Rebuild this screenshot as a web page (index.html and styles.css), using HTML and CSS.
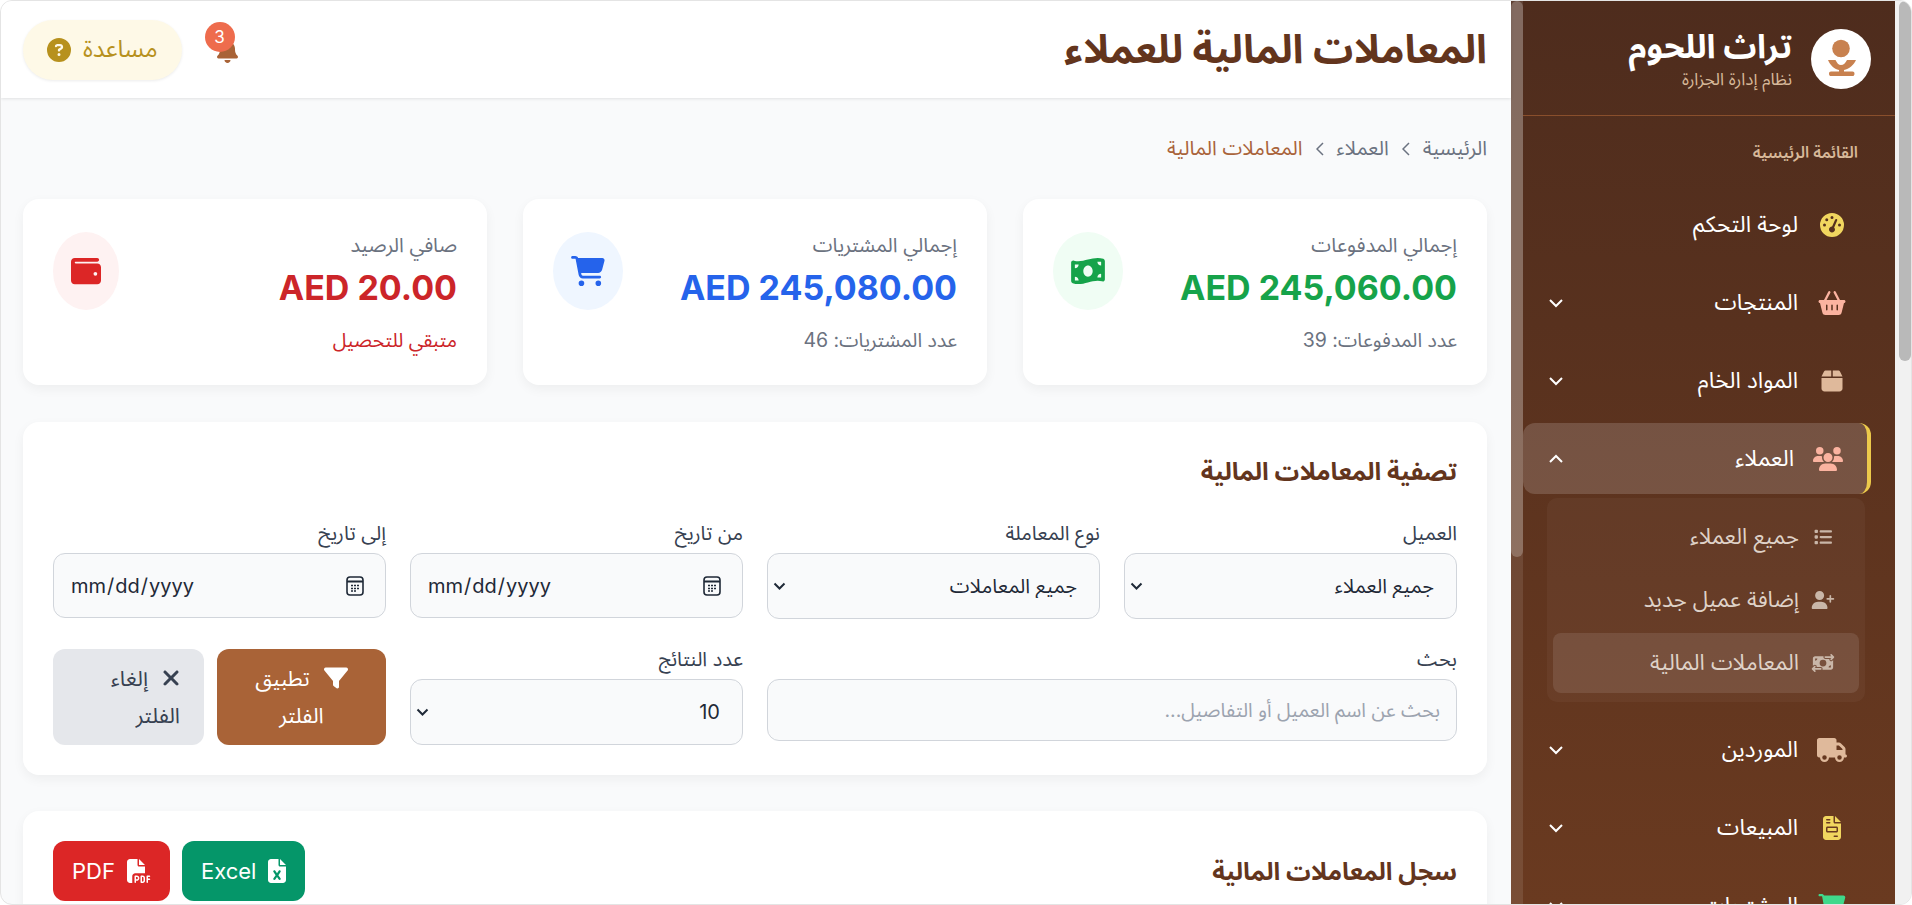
FILE: index.html
```html
<!DOCTYPE html>
<html lang="ar" dir="rtl">
<head>
    <meta charset="UTF-8">
    <meta name="viewport" content="width=device-width, initial-scale=1.0">
    <title>المعاملات المالية للعملاء</title>
    <link rel="stylesheet" href="styles.css">
</head>
<body>
<div class="window">
    <div class="page-rail"><div class="page-thumb"></div></div>

    <aside class="sidebar">
        <div class="sidebar-panel">
            <div class="brand">
                <div class="logo">
                    <svg viewBox="0 0 60 60" width="60" height="60">
                        <circle cx="30" cy="19.500" r="8.800" fill="#c8814f"/>
                        <path d="M17 31h7.500c1.500 3 3 5 5.500 5s4.500-2 6-5h9c-2 5-7 9-12 10v1.500h8.500c1.200 0 2 .8 2 2.200s-.8 2.300-2 2.300H20c-1.200 0-2-.9-2-2.300s.8-2.200 2-2.200h8V41c-5-1-9-5-11-10z" fill="#c8814f"/>
                    </svg>
                </div>
                <div class="brand-text">
                    <div class="brand-name">تراث اللحوم</div>
                    <div class="brand-sub">نظام إدارة الجزارة</div>
                </div>
            </div>
            <nav class="nav">
                <div class="nav-title">القائمة الرئيسية</div>

                <a class="nav-item">
                    <svg class="nav-icon ic-yellow" viewBox="0 0 512 512"><path d="M0 256a256 256 0 1 1 512 0A256 256 0 1 1 0 256zM288 96a32 32 0 1 0 -64 0 32 32 0 1 0 64 0zM256 416c35.300 0 64-28.700 64-64c0-17.400-6.900-33.100-18.100-44.600L366 161.700c5.300-12.100-.2-26.300-12.300-31.600s-26.300 .2-31.600 12.300L257.900 288c-.6 0-1.300 0-1.900 0c-35.300 0-64 28.700-64 64s28.700 64 64 64zM176 144a32 32 0 1 0 -64 0 32 32 0 1 0 64 0zM96 288a32 32 0 1 0 0-64 32 32 0 1 0 0 64zm352-32a32 32 0 1 0 -64 0 32 32 0 1 0 64 0z"/></svg>
                    <span>لوحة التحكم</span>
                </a>
                <a class="nav-item">
                    <svg class="nav-icon ic-coral" viewBox="0 0 576 512"><path d="M253.300 35.100c6.100-11.800 1.500-26.300-10.200-32.400s-26.300-1.500-32.400 10.200L117.600 192H32c-17.700 0-32 14.300-32 32s14.300 32 32 32L83.900 463.500C91 492 116.600 512 146 512H430c29.400 0 55-20 62.100-48.500L544 256c17.700 0 32-14.300 32-32s-14.300-32-32-32H458.400L365.300 12.900C359.200 1.200 344.700-3.400 332.900 2.700s-16.300 20.600-10.200 32.400L404.300 192H171.700L253.300 35.100zM192 304v96c0 8.800-7.200 16-16 16s-16-7.200-16-16V304c0-8.800 7.200-16 16-16s16 7.200 16 16zm96-16c8.800 0 16 7.200 16 16v96c0 8.800-7.200 16-16 16s-16-7.200-16-16V304c0-8.800 7.200-16 16-16zm128 16v96c0 8.800-7.200 16-16 16s-16-7.200-16-16V304c0-8.800 7.200-16 16-16s16 7.200 16 16z"/></svg>
                    <span>المنتجات</span>
                    <svg class="chevron" viewBox="0 0 16 10"><path d="M2 2l6 6 6-6"/></svg>
                </a>
                <a class="nav-item">
                    <svg class="nav-icon ic-tan" viewBox="0 0 448 512"><path d="M50.700 58.500L0 160H208V32H93.700C75.500 32 58.900 42.300 50.700 58.500zM240 160H448L397.300 58.500C389.100 42.300 372.500 32 354.300 32H240V160zm208 32H0V416c0 35.300 28.700 64 64 64H384c35.300 0 64-28.700 64-64V192z"/></svg>
                    <span>المواد الخام</span>
                    <svg class="chevron" viewBox="0 0 16 10"><path d="M2 2l6 6 6-6"/></svg>
                </a>
                <a class="nav-item active">
                    <svg class="nav-icon ic-coral" viewBox="0 0 640 512"><path d="M144 0a80 80 0 1 1 0 160A80 80 0 1 1 144 0zM512 0a80 80 0 1 1 0 160A80 80 0 1 1 512 0zM0 298.700C0 239.800 47.800 192 106.700 192h42.700c15.900 0 31 3.500 44.600 9.700c-1.300 7.200-1.900 14.700-1.900 22.300c0 38.200 16.800 72.500 43.300 96c-.2 0-.4 0-.7 0H21.300C9.600 320 0 310.400 0 298.700zM405.300 320c-.2 0-.4 0-.7 0c26.600-23.500 43.300-57.800 43.300-96c0-7.600-.7-15-1.900-22.300c13.600-6.300 28.700-9.700 44.600-9.700h42.700C592.200 192 640 239.800 640 298.700c0 11.800-9.600 21.300-21.300 21.300H405.300zM224 224a96 96 0 1 1 192 0 96 96 0 1 1 -192 0zM128 485.300C128 411.700 187.700 352 261.300 352H378.700C452.300 352 512 411.700 512 485.300c0 14.700-11.900 26.700-26.700 26.700H154.700c-14.700 0-26.700-11.900-26.700-26.700z"/></svg>
                    <span>العملاء</span>
                    <svg class="chevron" viewBox="0 0 16 10"><path d="M2 8l6-6 6 6"/></svg>
                </a>
                <div class="submenu">
                    <a class="sub-item">
                        <svg class="sub-icon" viewBox="0 0 512 512"><path d="M40 48C26.700 48 16 58.700 16 72v48c0 13.300 10.700 24 24 24H88c13.300 0 24-10.700 24-24V72c0-13.300-10.700-24-24-24H40zM192 64c-17.700 0-32 14.300-32 32s14.300 32 32 32H480c17.700 0 32-14.300 32-32s-14.300-32-32-32H192zm0 160c-17.700 0-32 14.300-32 32s14.300 32 32 32H480c17.700 0 32-14.300 32-32s-14.300-32-32-32H192zm0 160c-17.700 0-32 14.300-32 32s14.300 32 32 32H480c17.700 0 32-14.300 32-32s-14.300-32-32-32H192zM16 232v48c0 13.300 10.700 24 24 24H88c13.300 0 24-10.700 24-24V232c0-13.300-10.700-24-24-24H40c-13.300 0-24 10.700-24 24zM40 368c-13.300 0-24 10.700-24 24v48c0 13.300 10.700 24 24 24H88c13.300 0 24-10.700 24-24V392c0-13.300-10.700-24-24-24H40z"/></svg>
                        <span>جميع العملاء</span>
                    </a>
                    <a class="sub-item">
                        <svg class="sub-icon" viewBox="0 0 640 512"><path d="M96 128a128 128 0 1 1 256 0A128 128 0 1 1 96 128zM0 482.300C0 383.800 79.800 304 178.300 304h91.400C368.200 304 448 383.800 448 482.300c0 16.400-13.300 29.700-29.700 29.700H29.700C13.300 512 0 498.700 0 482.300zM504 312V248H440c-13.300 0-24-10.700-24-24s10.700-24 24-24h64V136c0-13.300 10.700-24 24-24s24 10.700 24 24v64h64c13.300 0 24 10.700 24 24s-10.700 24-24 24H552v64c0 13.300-10.700 24-24 24s-24-10.700-24-24z"/></svg>
                        <span>إضافة عميل جديد</span>
                    </a>
                    <a class="sub-item current">
                        <svg class="sub-icon" viewBox="0 0 640 512"><path d="M535 41c-9.400-9.400-9.400-24.600 0-33.900s24.600-9.400 33.900 0l64 64c4.500 4.500 7 10.600 7 17s-2.500 12.500-7 17l-64 64c-9.400 9.400-24.600 9.400-33.900 0s-9.400-24.600 0-33.900l23-23L384 112c-13.300 0-24-10.700-24-24s10.700-24 24-24l174.100 0L535 41zM105 377l-23 23L256 400c13.300 0 24 10.700 24 24s-10.700 24-24 24L81.900 448l23 23c9.400 9.400 9.400 24.600 0 33.900s-24.600 9.400-33.900 0L7 441c-4.500-4.500-7-10.600-7-17s2.500-12.500 7-17l64-64c9.400-9.400 24.600-9.400 33.900 0s9.400 24.600 0 33.900zM96 64H337.900c-3.700 7.200-5.900 15.300-5.900 24c0 28.700 23.300 52 52 52l117.400 0c-4 17 .6 35.500 13.800 48.800c20.300 20.300 53.200 20.300 73.500 0L608 169.500V384c0 35.300-28.700 64-64 64H302.100c3.700-7.200 5.900-15.300 5.900-24c0-28.700-23.300-52-52-52l-117.400 0c4-17-.6-35.500-13.800-48.800c-20.300-20.300-53.200-20.300-73.500 0L32 342.500V128c0-35.300 28.700-64 64-64zm64 64H96v64c35.300 0 64-28.700 64-64zM544 320c-35.300 0-64 28.700-64 64h64V320zM320 352a96 96 0 1 0 0-192 96 96 0 1 0 0 192z"/></svg>
                        <span>المعاملات المالية</span>
                    </a>
                </div>
                <a class="nav-item">
                    <svg class="nav-icon ic-tan" viewBox="0 0 640 512"><path d="M48 0C21.500 0 0 21.500 0 48V368c0 26.500 21.500 48 48 48H64c0 53 43 96 96 96s96-43 96-96H384c0 53 43 96 96 96s96-43 96-96h32c17.700 0 32-14.300 32-32s-14.300-32-32-32V288 256 237.300c0-17-6.700-33.300-18.700-45.300L512 114.700c-12-12-28.300-18.700-45.300-18.700H416V48c0-26.500-21.500-48-48-48H48zM416 160h50.700L544 237.300V256H416V160zM112 416a48 48 0 1 1 96 0 48 48 0 1 1 -96 0zm368-48a48 48 0 1 1 0 96 48 48 0 1 1 0-96z"/></svg>
                    <span>الموردين</span>
                    <svg class="chevron" viewBox="0 0 16 10"><path d="M2 2l6 6 6-6"/></svg>
                </a>
                <a class="nav-item">
                    <svg class="nav-icon ic-yellow" viewBox="0 0 384 512"><path d="M64 0C28.700 0 0 28.700 0 64V448c0 35.300 28.700 64 64 64H320c35.300 0 64-28.700 64-64V160H256c-17.700 0-32-14.300-32-32V0H64zM256 0V128H384L256 0zM80 64h64c8.800 0 16 7.200 16 16s-7.200 16-16 16H80c-8.800 0-16-7.200-16-16s7.200-16 16-16zm0 64h64c8.800 0 16 7.200 16 16s-7.200 16-16 16H80c-8.800 0-16-7.200-16-16s7.200-16 16-16zm16 96H288c17.700 0 32 14.300 32 32v64c0 17.700-14.300 32-32 32H96c-17.700 0-32-14.300-32-32V256c0-17.700 14.300-32 32-32zm0 32v64H288V256H96zM240 416h64c8.800 0 16 7.200 16 16s-7.200 16-16 16H240c-8.800 0-16-7.200-16-16s7.200-16 16-16z"/></svg>
                    <span>المبيعات</span>
                    <svg class="chevron" viewBox="0 0 16 10"><path d="M2 2l6 6 6-6"/></svg>
                </a>
                <a class="nav-item">
                    <svg class="nav-icon ic-green" viewBox="0 0 576 512"><path d="M0 24C0 10.700 10.700 0 24 0H69.500c22 0 41.500 12.800 50.600 32h411c26.300 0 45.500 25 38.600 50.400l-41 152.300c-8.500 31.400-37 53.300-69.500 53.300H170.700l5.400 28.500c2.200 11.300 12.100 19.500 23.600 19.500H488c13.300 0 24 10.700 24 24s-10.700 24-24 24H199.700c-34.600 0-64.300-24.600-70.700-58.500L77.400 54.500c-.7-3.800-4-6.500-7.900-6.500H24C10.700 48 0 37.300 0 24zM128 464a48 48 0 1 1 96 0 48 48 0 1 1 -96 0zm336-48a48 48 0 1 1 0 96 48 48 0 1 1 0-96z"/></svg>
                    <span>المشتريات</span>
                    <svg class="chevron" viewBox="0 0 16 10"><path d="M2 2l6 6 6-6"/></svg>
                </a>
            </nav>
        </div>
        <div class="sidebar-rail"><div class="sidebar-thumb"></div></div>
    </aside>

    <div class="main">
        <header class="topbar">
            <h1>المعاملات المالية للعملاء</h1>
            <div class="topbar-tools">
                <div class="bell">
                    <svg viewBox="0 0 448 512"><path d="M224 0c-17.700 0-32 14.300-32 32V51.200C119 66 64 130.600 64 208v18.800c0 47-17.300 92.400-48.500 127.600l-7.400 8.300c-8.400 9.400-10.400 22.900-5.300 34.400S19.400 416 32 416H416c12.600 0 24-7.400 29.200-18.900s3.100-25-5.300-34.400l-7.400-8.300C401.300 319.200 384 273.900 384 226.800V208c0-77.400-55-142-128-156.800V32c0-17.700-14.300-32-32-32zm45.300 493.300c12-12 18.700-28.300 18.700-45.300H224 160c0 17 6.700 33.300 18.700 45.300s28.300 18.700 45.300 18.700s33.300-6.700 45.300-18.700z"/></svg>
                    <span class="badge">3</span>
                </div>
                <button class="help-btn">
                    <span>مساعدة</span>
                    <svg viewBox="0 0 512 512"><path d="M256 512A256 256 0 1 0 256 0a256 256 0 1 0 0 512zM169.800 165.300c7.900-22.300 29.100-37.300 52.800-37.300h58.300c34.900 0 63.100 28.300 63.100 63.100c0 22.600-12.100 43.500-31.700 54.800L280 264.400c-.2 13-10.900 23.600-24 23.600c-13.300 0-24-10.700-24-24V250.500c0-8.600 4.600-16.500 12.100-20.800l44.300-25.400c4.700-2.700 7.600-7.700 7.600-13.100c0-8.400-6.800-15.100-15.100-15.100H222.600c-3.400 0-6.400 2.100-7.500 5.300l-.4 1.200c-4.400 12.500-18.200 19-30.600 14.600s-19-18.200-14.600-30.600l.4-1.200zM224 352a32 32 0 1 1 64 0 32 32 0 1 1 -64 0z"/></svg>
                </button>
            </div>
        </header>

        <div class="content">
            <div class="breadcrumb">
                <span>الرئيسية</span>
                <svg viewBox="0 0 8 14"><path d="M7 1L1 7l6 6"/></svg>
                <span>العملاء</span>
                <svg viewBox="0 0 8 14"><path d="M7 1L1 7l6 6"/></svg>
                <span class="crumb-current">المعاملات المالية</span>
            </div>

            <div class="stats">
                <div class="stat-card">
                    <div class="stat-text">
                        <div class="stat-label">إجمالي المدفوعات</div>
                        <div class="stat-value green">AED 245,060.00</div>
                        <div class="stat-note">عدد المدفوعات: 39</div>
                    </div>
                    <div class="stat-icon bg-green">
                        <svg class="green" viewBox="0 0 576 512"><path d="M0 112.500V422.300c0 18 10.100 35 27 41.300c87 32.500 174 10.300 261-11.900c79.800-20.300 159.600-40.700 239.300-18.900c23 6.300 48.700-9.500 48.700-33.400V89.700c0-18-10.100-35-27-41.300C462 15.900 375 38.100 288 60.300C208.200 80.600 128.400 100.900 48.700 79.100C25.600 72.800 0 88.600 0 112.500zM288 352c-44.200 0-80-43-80-96s35.800-96 80-96s80 43 80 96s-35.800 96-80 96zM64 352c35.300 0 64 28.700 64 64H64V352zm64-208c0 35.300-28.700 64-64 64V144h64zM512 304v64H448c0-35.300 28.700-64 64-64zM448 96h64v64c-35.300 0-64-28.700-64-64z"/></svg>
                    </div>
                </div>
                <div class="stat-card">
                    <div class="stat-text">
                        <div class="stat-label">إجمالي المشتريات</div>
                        <div class="stat-value blue">AED 245,080.00</div>
                        <div class="stat-note">عدد المشتريات: 46</div>
                    </div>
                    <div class="stat-icon bg-blue">
                        <svg class="blue" viewBox="0 0 576 512"><path d="M0 24C0 10.700 10.700 0 24 0H69.500c22 0 41.500 12.800 50.600 32h411c26.300 0 45.500 25 38.600 50.400l-41 152.300c-8.500 31.400-37 53.300-69.500 53.300H170.700l5.400 28.500c2.200 11.300 12.100 19.500 23.600 19.500H488c13.300 0 24 10.700 24 24s-10.700 24-24 24H199.700c-34.600 0-64.300-24.600-70.700-58.500L77.400 54.500c-.7-3.800-4-6.500-7.900-6.500H24C10.700 48 0 37.300 0 24zM128 464a48 48 0 1 1 96 0 48 48 0 1 1 -96 0zm336-48a48 48 0 1 1 0 96 48 48 0 1 1 0-96z"/></svg>
                    </div>
                </div>
                <div class="stat-card">
                    <div class="stat-text">
                        <div class="stat-label">صافي الرصيد</div>
                        <div class="stat-value red">AED 20.00</div>
                        <div class="stat-note red">متبقي للتحصيل</div>
                    </div>
                    <div class="stat-icon bg-red narrow">
                        <svg class="wallet" viewBox="0 0 512 512"><path d="M64 32C28.700 32 0 60.700 0 96V416c0 35.300 28.700 64 64 64H448c35.300 0 64-28.700 64-64V192c0-35.300-28.700-64-64-64H80c-8.800 0-16-7.200-16-16s7.200-16 16-16H448c17.700 0 32-14.300 32-32s-14.300-32-32-32H64zM416 272a32 32 0 1 1 0 64 32 32 0 1 1 0-64z"/></svg>
                    </div>
                </div>
            </div>

            <section class="card filter-card">
                <h2>تصفية المعاملات المالية</h2>
                <div class="filter-grid">
                    <div class="field">
                        <label>العميل</label>
                        <select class="control picker"><option>جميع العملاء</option></select>
                    </div>
                    <div class="field">
                        <label>نوع المعاملة</label>
                        <select class="control picker"><option>جميع المعاملات</option></select>
                    </div>
                    <div class="field">
                        <label>من تاريخ</label>
                        <input class="control date" type="date">
                    </div>
                    <div class="field">
                        <label>إلى تاريخ</label>
                        <input class="control date" type="date">
                    </div>
                    <div class="field span-2">
                        <label>بحث</label>
                        <input class="control search" type="text" placeholder="بحث عن اسم العميل أو التفاصيل...">
                    </div>
                    <div class="field">
                        <label>عدد النتائج</label>
                        <select class="control picker"><option>10</option></select>
                    </div>
                    <div class="filter-actions">
                        <button class="btn btn-apply">
                            <svg viewBox="0 0 512 512"><path d="M3.900 54.900C10.500 40.900 24.500 32 40 32H472c15.500 0 29.500 8.900 36.100 22.900s4.600 30.500-5.200 42.500L320 320.900V448c0 12.100-6.800 23.200-17.700 28.600s-23.800 4.300-33.500-3l-64-48c-8.100-6-12.800-15.500-12.800-25.600V320.900L9 97.300C-.7 85.400-2.800 68.800 3.900 54.900z"/></svg>
                            تطبيق الفلتر
                        </button>
                        <button class="btn btn-clear">
                            <svg viewBox="0 0 384 512"><path d="M342.600 150.600c12.500-12.500 12.500-32.800 0-45.300s-32.800-12.500-45.300 0L192 210.700 86.600 105.400c-12.500-12.500-32.800-12.500-45.300 0s-12.500 32.800 0 45.300L146.700 256 41.400 361.400c-12.500 12.500-12.500 32.800 0 45.300s32.800 12.500 45.300 0L192 301.300 297.400 406.600c12.500 12.500 32.800 12.500 45.300 0s12.500-32.800 0-45.300L237.300 256 342.600 150.600z"/></svg>
                            إلغاء الفلتر
                        </button>
                    </div>
                </div>
            </section>

            <section class="card log-card">
                <h2>سجل المعاملات المالية</h2>
                <div class="export-btns">
                    <button class="btn-export excel">
                        <svg viewBox="0 0 384 512"><path d="M64 0C28.700 0 0 28.700 0 64V448c0 35.300 28.700 64 64 64H320c35.300 0 64-28.700 64-64V160H256c-17.700 0-32-14.300-32-32V0H64zM256 0V128H384L256 0zM155.700 250.200L192 302.100l36.300-51.900c7.600-10.900 22.600-13.500 33.400-5.900s13.500 22.600 5.900 33.400L221.300 344l46.400 66.200c7.600 10.900 5 25.800-5.900 33.400s-25.800 5-33.400-5.900L192 385.800l-36.300 51.900c-7.600 10.900-22.600 13.500-33.400 5.900s-13.500-22.600-5.900-33.400L162.700 344l-46.400-66.200c-7.600-10.900-5-25.800 5.900-33.400s25.800-5 33.400 5.900z"/></svg>
                        <span>Excel</span>
                    </button>
                    <button class="btn-export pdf">
                        <svg viewBox="0 0 512 512"><path d="M0 64C0 28.700 28.700 0 64 0H224V128c0 17.700 14.300 32 32 32H384V304H176c-35.300 0-64 28.700-64 64V512H64c-35.300 0-64-28.700-64-64V64zm384 64H256V0L384 128zM176 352h32c30.900 0 56 25.100 56 56s-25.100 56-56 56H192v32c0 8.800-7.200 16-16 16s-16-7.200-16-16V448 368c0-8.800 7.200-16 16-16zm32 80c13.300 0 24-10.700 24-24s-10.700-24-24-24H192v48h16zm96-80h32c26.500 0 48 21.500 48 48v64c0 26.500-21.500 48-48 48H304c-8.800 0-16-7.200-16-16V368c0-8.800 7.200-16 16-16zm32 128c8.800 0 16-7.200 16-16V400c0-8.800-7.200-16-16-16H320v96h16zm80-112c0-8.800 7.200-16 16-16h48c8.800 0 16 7.200 16 16s-7.200 16-16 16H448v32h32c8.800 0 16 7.200 16 16s-7.200 16-16 16H448v48c0 8.800-7.200 16-16 16s-16-7.200-16-16V432 368z"/></svg>
                        <span>PDF</span>
                    </button>
                </div>
            </section>
        </div>
    </div>
</div>
</body>
</html>
```

FILE: styles.css
```css
* {
    box-sizing: border-box;
}
html, body {
    height: 100%;
    margin: 0;
    overflow: hidden;
    background-color: #fff;
}
body {
    font-family: Inter, "Noto Sans Arabic", sans-serif;
    color: #374151;
}
button, input, select {
    font-family: inherit;
}
a {
    display: flex;
}

/* outer frame */
.window {
    display: flex;
    height: 100vh;
    overflow: hidden;
    border: 1px solid #e4e4e4;
    border-radius: 12px;
    background-color: #f9fafb;
}
.page-rail {
    flex: 0 0 16px;
    background-color: #f1f1f1;
}
.page-thumb {
    height: 360px;
    margin-left: 4px;
    border-radius: 6px;
    background-color: #b9b9b9;
}

/* sidebar */
.sidebar {
    display: flex;
    flex: 0 0 384px;
    background: linear-gradient(180deg, #4e2c1d 0%, #6a3a20 100%);
}
.sidebar-panel {
    flex: 1;
    min-width: 0;
    overflow: hidden;
}
.sidebar-rail {
    flex: 0 0 12px;
    background-color: rgba(255, 255, 255, 0.1);
}
.sidebar-thumb {
    height: 556px;
    border-radius: 6px;
    background-color: rgba(255, 255, 255, 0.22);
}
.brand {
    display: flex;
    align-items: center;
    gap: 19px;
    height: 115px;
    padding: 0 24px;
    border-bottom: 1px solid #8a4f2c;
}
.logo {
    width: 60px;
    height: 60px;
    margin-top: 1px;
    border-radius: 50%;
    background-color: #fff;
}
.logo svg {
    display: block;
}
.brand-name {
    font-size: 33px;
    font-weight: 700;
    line-height: 38px;
    color: #fff;
}
.brand-sub {
    margin-top: 3px;
    font-size: 17px;
    line-height: 22px;
    color: #d7b899;
}
.nav {
    padding-top: 23px;
}
.nav-title {
    height: 50px;
    padding: 0 37px 0 25px;
    font-size: 16px;
    font-weight: 600;
    line-height: 26px;
    color: #d7b899;
}
.nav-item {
    align-items: center;
    height: 71px;
    margin: 0 24px 7px 0;
    padding: 0 24px 0 25px;
    font-size: 22.500px;
    color: #fff;
}
.nav-item span {
    flex: 1;
}
.nav-item.active {
    margin-bottom: 4px;
    border-right: 4px solid #ecc94b;
    border-radius: 12px;
    background-color: rgba(255, 255, 255, 0.16);
}
.nav-icon {
    flex: 0 0 30px;
    height: 24px;
    margin-left: 19px;
}
.chevron {
    flex: 0 0 16px;
    height: 10px;
    fill: none;
    stroke: #fff;
    stroke-width: 2;
}
.ic-yellow {
    fill: #f1d65f;
}
.ic-coral {
    fill: #fbb3a0;
}
.ic-tan {
    fill: #dfb99b;
}
.ic-green {
    fill: #3fd98b;
}
.submenu {
    display: flex;
    flex-direction: column;
    gap: 3px;
    margin: 0 30px 12px 24px;
    padding: 9px 6px;
    border-radius: 10px;
    background-color: rgba(255, 255, 255, 0.04);
}
.sub-item {
    align-items: center;
    height: 60px;
    padding: 0 24px;
    border-radius: 8px;
    font-size: 22px;
    color: #dfd2c8;
}
.sub-item.current {
    background-color: rgba(255, 255, 255, 0.1);
}
.sub-icon {
    flex: 0 0 24px;
    height: 18px;
    margin-left: 12px;
    fill: #c9b6a8;
}

/* main column */
.main {
    flex: 1;
    min-width: 0;
}
.topbar {
    display: flex;
    align-items: center;
    justify-content: space-between;
    height: 97px;
    padding: 0 24px 0 22px;
    background-color: #fff;
    box-shadow: 0 1px 3px rgba(0, 0, 0, 0.1);
}
.topbar h1 {
    margin: 0 0 2px;
    font-size: 40px;
    font-weight: 700;
    line-height: 60px;
    color: #63351d;
}
.topbar-tools {
    display: flex;
    align-items: center;
    gap: 35px;
}
.bell {
    position: relative;
    width: 21px;
    height: 24px;
    margin-top: 2px;
}
.bell svg {
    display: block;
    width: 21px;
    height: 24px;
    fill: #a96337;
}
.badge {
    position: absolute;
    top: -17px;
    right: 3px;
    width: 30px;
    height: 30px;
    border-radius: 50%;
    background-color: #ee6c4d;
    color: #fff;
    font-size: 17px;
    line-height: 30px;
    text-align: center;
}
.help-btn {
    display: flex;
    align-items: center;
    gap: 12px;
    height: 60px;
    padding: 0 24px;
    border: 0;
    border-radius: 30px;
    background-color: #fef9e7;
    box-shadow: 0 1px 3px rgba(0, 0, 0, 0.08);
    color: #b7911d;
    font-size: 24px;
}
.help-btn svg {
    width: 24px;
    height: 24px;
    fill: #b7911d;
}
.content {
    padding: 0 24px 0 22px;
}
.breadcrumb {
    display: flex;
    align-items: center;
    gap: 13px;
    height: 101px;
    font-size: 20px;
    color: #6b7280;
}
.breadcrumb svg {
    width: 8px;
    height: 14px;
    fill: none;
    stroke: #6b7280;
    stroke-width: 1.500;
}
.crumb-current {
    color: #a9633a;
}

/* stat cards */
.stats {
    display: grid;
    grid-template-columns: repeat(3, 1fr);
    gap: 36px;
    margin-bottom: 37px;
}
.stat-card {
    display: flex;
    justify-content: space-between;
    height: 186px;
    padding: 30px;
    border-radius: 16px;
    background-color: #fff;
    box-shadow: 0 4px 12px rgba(0, 0, 0, 0.05);
}
.stat-label {
    font-size: 20px;
    line-height: 32px;
    color: #6b7280;
}
.stat-value {
    margin-top: 3px;
    font-size: 34px;
    font-weight: 700;
    line-height: 48px;
}
.stat-note {
    margin-top: 14px;
    font-size: 19.500px;
    line-height: 28px;
    color: #6b7280;
}
.stat-icon {
    display: flex;
    flex: 0 0 70px;
    align-items: center;
    justify-content: center;
    height: 78px;
    margin-top: 3px;
    border-radius: 50%;
}
.stat-icon.narrow {
    flex-basis: 66px;
}
.stat-icon svg {
    width: 34px;
    height: 30px;
    fill: currentColor;
}
.stat-icon .wallet {
    fill: #dc2626;
}
.green {
    color: #16a34a;
}
.blue {
    color: #2563eb;
}
.red {
    color: #cc2529;
}
.stat-note.red {
    color: #cc2529;
}
.bg-green {
    background-color: #f0fdf4;
}
.bg-blue {
    background-color: #eff6ff;
}
.bg-red {
    background-color: #fef2f2;
}

/* filter + log cards */
.card {
    padding: 30px;
    border-radius: 16px;
    background-color: #fff;
    box-shadow: 0 4px 12px rgba(0, 0, 0, 0.05);
}
.card h2 {
    margin: 0;
    font-size: 24.500px;
    font-weight: 700;
    color: #63351d;
}
.filter-card {
    height: 353px;
    margin-bottom: 36px;
}
.filter-card h2 {
    margin-bottom: 30px;
    line-height: 38px;
}
.filter-grid {
    display: grid;
    grid-template-columns: repeat(4, 1fr);
    gap: 27px 24px;
}
.span-2 {
    grid-column: span 2;
}
.field label {
    display: block;
    height: 33px;
    font-size: 20px;
    line-height: 26px;
    color: #374151;
}
.control {
    display: block;
    width: 100%;
    height: 66px;
    padding: 0 16px;
    border: 1px solid #d1d5db;
    border-radius: 12px;
    background-color: #f9fafb;
    color: #1f2937;
    font-size: 20px;
}
.control.picker {
    appearance: none;
    padding-right: 22px;
    background-image: url("data:image/svg+xml,%3Csvg xmlns='http://www.w3.org/2000/svg' viewBox='0 0 13 8'%3E%3Cpath d='M1.500 1.500l5 5 5-5' fill='none' stroke='%231f2937' stroke-width='2'/%3E%3C/svg%3E");
    background-repeat: no-repeat;
    background-position: left 5px center;
    background-size: 13px 8px;
}
.control.date {
    height: 65px;
    direction: ltr;
    text-align: left;
}
.control.date::-webkit-calendar-picker-indicator {
    width: 18px;
    height: 20px;
    margin-right: 3px;
    background-image: url("data:image/svg+xml,%3Csvg xmlns='http://www.w3.org/2000/svg' viewBox='0 0 18 20'%3E%3Crect x='1' y='1' width='16' height='18' rx='3' fill='none' stroke='%231f2937' stroke-width='1.6'/%3E%3Cpath d='M1 5.500h16' stroke='%231f2937' stroke-width='2'/%3E%3Cpath d='M5 9.500h2M8 9.500h2M11 9.500h2M5 12.500h2M8 12.500h2M11 12.500h2M5 15h2M8 15h2' stroke='%231f2937' stroke-width='1.600'/%3E%3C/svg%3E");
    background-size: contain;
}
.control.search {
    height: 62px;
    font-size: 19.500px;
}
.control.search::placeholder {
    color: #9ca3af;
}
.filter-actions {
    display: flex;
    gap: 13px;
    margin-top: 3px;
}
.btn {
    height: 96px;
    border: 0;
    border-radius: 12px;
    font-size: 21.500px;
    line-height: 37px;
}
.btn svg {
    width: 24px;
    height: 24px;
    margin-left: 8px;
    vertical-align: -4px;
    fill: currentColor;
}
.btn-apply {
    flex: 0 0 169px;
    padding: 0 26px;
    background-color: #a96337;
    color: #fff;
}
.btn-clear {
    flex: 0 0 151px;
    padding: 0 24px;
    background-color: #e5e7eb;
    color: #374151;
    text-align: right;
}
.btn-clear svg {
    width: 18px;
}
.log-card {
    display: flex;
    align-items: flex-start;
    justify-content: space-between;
    min-height: 500px;
}
.log-card h2 {
    line-height: 60px;
}
.export-btns {
    display: flex;
    gap: 12px;
}
.btn-export {
    display: flex;
    align-items: center;
    gap: 12px;
    height: 60px;
    padding: 0 19px;
    border: 0;
    border-radius: 12px;
    color: #fff;
    font-size: 22px;
}
.btn-export svg {
    width: 24px;
    height: 24px;
    fill: #fff;
}
.excel {
    background-color: #059669;
}
.excel svg {
    width: 18px;
}
.pdf {
    background-color: #dc2626;
}
```
